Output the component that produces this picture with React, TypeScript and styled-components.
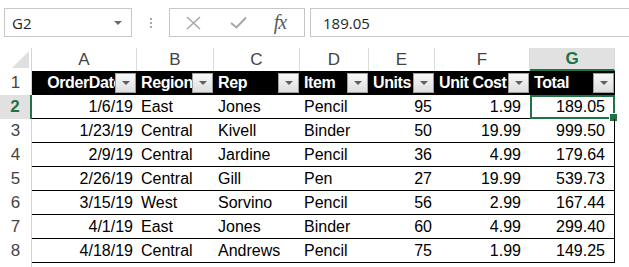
import React from 'react';
import styled, { createGlobalStyle, css } from 'styled-components';

const GlobalStyle = createGlobalStyle`
  body {
    margin: 0;
    background: #fff;
    font-family: "Liberation Sans", Arial, sans-serif;
  }
  * { box-sizing: border-box; }
`;

const Page = styled.div`
  width: 629px;
  height: 267px;
  overflow: hidden;
  background: #fff;
`;

const FormulaBar = styled.div`
  display: flex;
  align-items: stretch;
  height: 37px;
  padding: 8px 0 0 4px;
  margin-bottom: 11px;
`;

const NameBox = styled.div`
  width: 128px;
  border: 1px solid #c6c6c6;
  display: flex;
  align-items: center;
  justify-content: space-between;
  padding: 0 9px 0 7px;
  font-family: "Open Sans", "Noto Sans", sans-serif;
  font-size: 15px;
  color: #262626;
`;

const Caret = styled.span`
  width: 0;
  height: 0;
  border-left: 4px solid transparent;
  border-right: 4px solid transparent;
  border-top: 4px solid #6a6a6a;
`;

const Dots = styled.div`
  width: 37px;
  display: flex;
  flex-direction: column;
  align-items: center;
  justify-content: center;
  gap: 2px;
  span {
    width: 2px;
    height: 2px;
    background: #a8a8a8;
  }
`;

const FnBox = styled.div`
  width: 136px;
  border: 1px solid #c6c6c6;
  display: grid;
  grid-template-columns: 46px 44px 1fr;
  align-items: center;
  justify-items: center;
`;

const Fx = styled.span`
  font-family: "Liberation Serif", "Times New Roman", serif;
  font-style: italic;
  font-size: 20px;
  color: #5a5a5a;
  letter-spacing: -1px;
  padding-right: 4px;
`;

const FormulaInput = styled.div`
  flex: 1;
  margin-left: 5px;
  border: 1px solid #c6c6c6;
  border-right: none;
  display: flex;
  align-items: center;
  padding-left: 12px;
  font-family: "Open Sans", "Noto Sans", sans-serif;
  font-size: 15px;
  color: #262626;
`;

const Sheet = styled.div`
  display: grid;
  grid-template-columns: 32px 105px 77px 86px 69px 66px 95px 85px 1fr;
  grid-auto-rows: 24px;
  grid-template-rows: 23px;
  font-size: 16px;
`;

const Corner = styled.div`
  border-right: 1px solid #d4d4d4;
  display: flex;
  align-items: flex-end;
  justify-content: flex-end;
  padding: 0 2px 3px 0;
`;

const ColHead = styled.div<{ $active?: boolean }>`
  display: flex;
  align-items: center;
  justify-content: center;
  color: #444;
  font-size: 17px;
  border-right: 1px solid #dadada;
  ${({ $active }) =>
    $active &&
    css`
      background: #e1e1e1;
      color: #217346;
      font-weight: bold;
      border-bottom: 2px solid #217346;
    `}
`;

const RowHead = styled.div<{ $active?: boolean }>`
  display: flex;
  align-items: center;
  justify-content: center;
  color: #444;
  font-size: 17px;
  border-right: 1px solid #d4d4d4;
  ${({ $active }) =>
    $active &&
    css`
      background: #e1e1e1;
      color: #217346;
      font-weight: bold;
      border-right: 2px solid #217346;
    `}
`;

const HeadCell = styled.div<{ $center?: boolean }>`
  position: relative;
  background: #000;
  color: #fff;
  font-weight: bold;
  letter-spacing: -0.4px;
  display: flex;
  align-items: center;
  justify-content: ${({ $center }) => ($center ? 'center' : 'flex-start')};
  padding: 0 4px;
  white-space: nowrap;
  overflow: hidden;
`;

const FilterButton = styled.span`
  position: absolute;
  right: 1px;
  top: 2px;
  width: 21px;
  height: 20px;
  border: 1px solid #9e9e9e;
  background: linear-gradient(#f7f7f7, #dedede);
  display: flex;
  align-items: center;
  justify-content: center;
  &::after {
    content: '';
    border-left: 4px solid transparent;
    border-right: 4px solid transparent;
    border-top: 4px solid #606060;
  }
`;

const Cell = styled.div<{ $right?: boolean; $last?: boolean; $padRight: number }>`
  position: relative;
  display: flex;
  align-items: center;
  justify-content: ${({ $right }) => ($right ? 'flex-end' : 'flex-start')};
  padding: 0 ${({ $padRight }) => $padRight}px 0 4px;
  border-bottom: 1px solid #000;
  color: #000;
  white-space: nowrap;
  ${({ $last }) => $last && 'border-right: 1px solid #000;'}
`;

const Blank = styled.div``;

const Selection = styled.span`
  position: absolute;
  left: 0;
  top: 0;
  right: -1px;
  bottom: -1px;
  border: 2px solid #217346;
  &::after {
    content: '';
    position: absolute;
    right: -5px;
    bottom: -5px;
    width: 7px;
    height: 7px;
    background: #217346;
    border: 1px solid #fff;
  }
`;

const columns = ['A', 'B', 'C', 'D', 'E', 'F', 'G'];
const headers = ['OrderDate', 'Region', 'Rep', 'Item', 'Units', 'Unit Cost', 'Total'];
const rightAligned = [true, false, false, false, true, true, true];
const padRight = [4, 4, 4, 4, 3, 9, 9];

const rows = [
  ['1/6/19', 'East', 'Jones', 'Pencil', '95', '1.99', '189.05'],
  ['1/23/19', 'Central', 'Kivell', 'Binder', '50', '19.99', '999.50'],
  ['2/9/19', 'Central', 'Jardine', 'Pencil', '36', '4.99', '179.64'],
  ['2/26/19', 'Central', 'Gill', 'Pen', '27', '19.99', '539.73'],
  ['3/15/19', 'West', 'Sorvino', 'Pencil', '56', '2.99', '167.44'],
  ['4/1/19', 'East', 'Jones', 'Binder', '60', '4.99', '299.40'],
  ['4/18/19', 'Central', 'Andrews', 'Pencil', '75', '1.99', '149.25'],
];

export default function App() {
  return (
    <Page>
      <GlobalStyle />
      <FormulaBar>
        <NameBox>
          G2
          <Caret />
        </NameBox>
        <Dots>
          <span />
          <span />
          <span />
        </Dots>
        <FnBox>
          <svg width="15" height="14" viewBox="0 0 15 14">
            <path d="M1 1 L14 13 M14 1 L1 13" stroke="#a6a6a6" strokeWidth="1.4" fill="none" />
          </svg>
          <svg width="17" height="13" viewBox="0 0 17 13">
            <path d="M1 7 L6.5 11.5 L16 1.5" stroke="#a6a6a6" strokeWidth="2" fill="none" />
          </svg>
          <Fx>fx</Fx>
        </FnBox>
        <FormulaInput>189.05</FormulaInput>
      </FormulaBar>

      <Sheet>
        <Corner>
          <svg width="17" height="17" viewBox="0 0 17 17">
            <path d="M17 0 L17 17 L0 17 Z" fill="#dfdfdf" />
          </svg>
        </Corner>
        {columns.map((c) => (
          <ColHead key={c} $active={c === 'G'}>
            {c}
          </ColHead>
        ))}
        <Blank />

        <RowHead>1</RowHead>
        {headers.map((h, i) => (
          <HeadCell key={h} $center={i === 0}>
            {h}
            <FilterButton />
          </HeadCell>
        ))}
        <Blank />

        {rows.map((r, ri) => (
          <React.Fragment key={ri}>
            <RowHead $active={ri === 0}>{ri + 2}</RowHead>
            {r.map((v, ci) => (
              <Cell
                key={ci}
                $right={rightAligned[ci]}
                $last={ci === 6}
                $padRight={padRight[ci]}
              >
                {v}
                {ri === 0 && ci === 6 && <Selection />}
              </Cell>
            ))}
            <Blank />
          </React.Fragment>
        ))}

        <RowHead />
      </Sheet>
    </Page>
  );
}
